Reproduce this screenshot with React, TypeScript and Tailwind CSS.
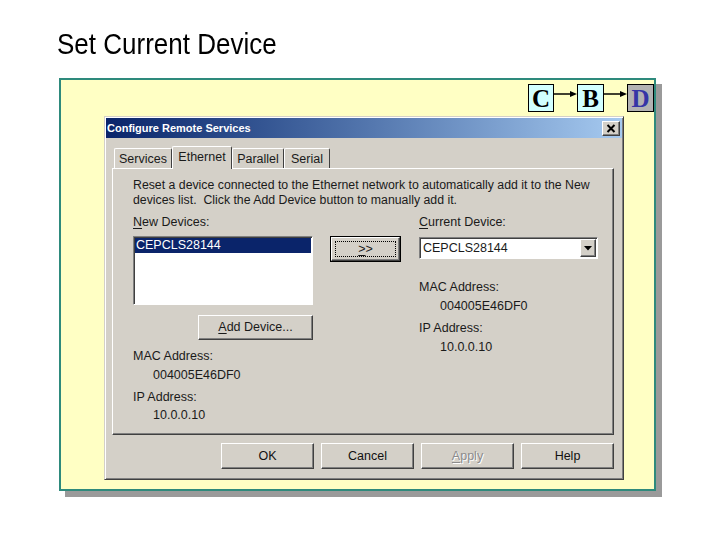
import React from "react";

const raised =
  "border border-t-white border-l-white border-r-[#404040] border-b-[#404040] shadow-[inset_-1px_-1px_0_#808080]";
const sunken =
  "border border-t-[#808080] border-l-[#808080] border-r-white border-b-white shadow-[inset_1px_1px_0_#404040]";

const U = ({ children }: { children: React.ReactNode }) => (
  <span className="underline underline-offset-[2px]">{children}</span>
);

const Box = ({ letter, w, dark }: { letter: string; w: string; dark?: boolean }) => (
  <div
    className={`h-[28px] ${w} border border-black flex items-center justify-center font-['Liberation_Serif',serif] font-bold text-[25px] leading-none ${
      dark ? "bg-[#b2b2b2] text-[#3535a6]" : "bg-[#d2ffff] text-black"
    }`}
  >
    {letter}
  </div>
);

const Arrow = () => (
  <svg width="23" height="28" viewBox="0 0 23 28" className="block shrink-0">
    <line x1="0" y1="10" x2="17" y2="10" stroke="black" strokeWidth="1.5" />
    <polygon points="16,7 23,10 16,13" fill="black" />
  </svg>
);

const tabs = [
  { label: "Services", w: "w-[58px]" },
  { label: "Ethernet", w: "w-[60px]", active: true },
  { label: "Parallel", w: "w-[52px]" },
  { label: "Serial", w: "w-[46px]" },
];

const Button = ({ children, disabled }: { children: React.ReactNode; disabled?: boolean }) => (
  <div
    className={`w-[93px] h-[26px] ${raised} flex items-center justify-center ${
      disabled ? "text-[#8c8c8c] [text-shadow:1px_1px_0_#fff]" : "text-[#111]"
    }`}
  >
    {children}
  </div>
);

const Dialog = () => {
  return (
    <div className="mt-[4px] ml-[43px] w-[520px] h-[364px] bg-[#d4d0c8] p-px border border-t-[#d4d0c8] border-l-[#d4d0c8] border-r-[#404040] border-b-[#404040] shadow-[inset_1px_1px_0_#fff,inset_-1px_-1px_0_#808080] text-[12.5px] leading-[15px] text-[#1a1a1a]">
      {/* title bar */}
      <div className="h-[20px] bg-linear-to-r from-[#0a246a] to-[#a6caf0] flex items-center justify-between pl-px pr-[2px]">
        <span className="text-white font-bold text-[11px]">Configure Remote Services</span>
        <div className={`w-[18px] h-[15px] bg-[#d4d0c8] ${raised} flex items-center justify-center`}>
          <svg width="10" height="9" viewBox="0 0 10 9">
            <path d="M1.5 1 L8.5 8 M8.5 1 L1.5 8" stroke="black" strokeWidth="2" />
          </svg>
        </div>
      </div>

      {/* tabs */}
      <div className="mt-[8px] ml-[8px] h-[22px] flex items-end">
        {tabs.map((t) =>
          t.active ? (
            <div
              key={t.label}
              className={`${t.w} h-[23px] -mb-px relative z-10 bg-[#d4d0c8] border-t border-l border-r border-t-white border-l-white border-r-[#404040] rounded-t-[2px] flex justify-center pt-[3px]`}
            >
              {t.label}
            </div>
          ) : (
            <div
              key={t.label}
              className={`${t.w} h-[20px] border-t border-l border-r border-t-white border-l-white border-r-[#404040] rounded-t-[2px] flex justify-center pt-[3px]`}
            >
              {t.label}
            </div>
          )
        )}
      </div>

      {/* tab panel */}
      <div className={`ml-[6px] w-[502px] h-[267px] ${raised} pl-[20px] pt-[9px]`}>
        <p className="whitespace-nowrap text-[12.3px]">
          Reset a device connected to the Ethernet network to automatically add it to the New
          <br />
          devices list.&nbsp; Click the Add Device button to manually add it.
        </p>

        <div className="mt-[7px] flex">
          {/* left column */}
          <div className="w-[180px] flex flex-col">
            <div>
              <U>N</U>ew Devices:
            </div>
            <div className={`mt-[6px] h-[69px] bg-white ${sunken} p-px`}>
              <div className="h-[15px] bg-[#0a246a] text-white pl-px">CEPCLS28144</div>
            </div>
            <div className={`self-end mt-[10px] w-[115px] h-[25px] ${raised} flex items-center justify-center`}>
              <span>
                <U>A</U>dd Device...
              </span>
            </div>
            <div className="mt-[9px]">MAC Address:</div>
            <div className="mt-[4px] pl-[20px]">004005E46DF0</div>
            <div className="mt-[7px]">IP Address:</div>
            <div className="mt-[3px] pl-[20px]">10.0.0.10</div>
          </div>

          {/* middle button */}
          <div className="ml-[17px] mt-[21px] w-[71px] h-[26px] border border-black">
            <div className={`w-full h-full ${raised} p-[3px]`}>
              <div className="w-full h-full border border-dotted border-black flex items-center justify-center leading-none">
                <span>
                  <U>&gt;</U>&gt;
                </span>
              </div>
            </div>
          </div>

          {/* right column */}
          <div className="ml-[18px] w-[179px] flex flex-col">
            <div>
              <U>C</U>urrent Device:
            </div>
            <div className={`mt-[7px] h-[22px] bg-white ${sunken} p-px flex items-center`}>
              <span className="flex-1 pl-[2px]">CEPCLS28144</span>
              <div className={`w-[16px] h-[18px] bg-[#d4d0c8] ${raised} flex items-center justify-center`}>
                <svg width="8" height="5" viewBox="0 0 8 5">
                  <polygon points="0,0 8,0 4,4.5" fill="black" />
                </svg>
              </div>
            </div>
            <div className="mt-[21px]">MAC Address:</div>
            <div className="mt-[4px] pl-[21px]">004005E46DF0</div>
            <div className="mt-[7px]">IP Address:</div>
            <div className="mt-[4px] pl-[21px]">10.0.0.10</div>
          </div>
        </div>
      </div>

      {/* bottom buttons */}
      <div className="mt-[8px] w-[508px] flex justify-end gap-[7px]">
        <Button>OK</Button>
        <Button>Cancel</Button>
        <Button disabled>
          <span>
            <U>A</U>pply
          </span>
        </Button>
        <Button>Help</Button>
      </div>
    </div>
  );
};

export default function App() {
  return (
    <div className="w-[720px] h-[540px] bg-white overflow-hidden font-['Liberation_Sans',Arial,sans-serif] pl-[59px] pt-[30px]">
      <h1 className="-ml-[2px] text-[26px] leading-[30px] text-black scale-y-[1.12] origin-[0_24px]">
        Set Current Device
      </h1>
      <div className="mt-[18px] w-[597px] h-[413px] border-2 border-[#2e8a7c] bg-[#ffffc4] shadow-[6px_6px_0_#9a9a9a]">
        <div className="flex justify-end items-start mt-[4px] h-[28px]">
          <Box letter="C" w="w-[26px]" />
          <Arrow />
          <Box letter="B" w="w-[27px]" />
          <Arrow />
          <Box letter="D" w="w-[27px]" dark />
        </div>
        <Dialog />
      </div>
    </div>
  );
}
